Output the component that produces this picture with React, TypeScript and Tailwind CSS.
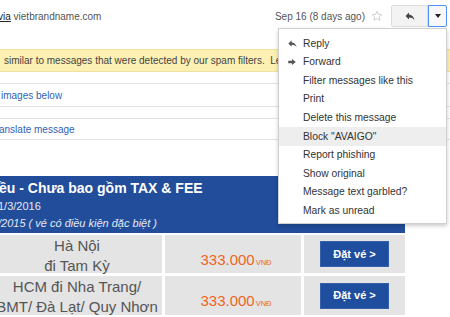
import React from 'react';

// --- Menu items (the mail "more" dropdown) ---
const menuItems = [
  { label: 'Reply', icon: 'reply' },
  { label: 'Forward', icon: 'forward' },
  { label: 'Filter messages like this' },
  { label: 'Print' },
  { label: 'Delete this message' },
  { label: 'Block "AVAIGO"', active: true },
  { label: 'Report phishing' },
  { label: 'Show original' },
  { label: 'Message text garbled?' },
  { label: 'Mark as unread' },
];

const fares = [
  { route: ['Hà Nội', 'đi Tam Kỳ'], price: '333.000' },
  { route: ['HCM đi Nha Trang/', 'BMT/ Đà Lạt/ Quy Nhơn'], price: '333.000' },
];

function ReplyIcon({ className }: { className?: string }) {
  return (
    <svg viewBox="0 0 24 24" className={className} fill="currentColor">
      <path d="M10 9V5l-7 7 7 7v-4.1c5 0 8.5 1.6 11 5.1-1-5-4-10-11-11z" />
    </svg>
  );
}

function ForwardIcon({ className }: { className?: string }) {
  return (
    <svg viewBox="0 0 24 24" className={className} fill="currentColor">
      <path d="M12 5v4H3v6h9v4l9-7z" />
    </svg>
  );
}

export default function App() {
  return (
    <div className="relative w-[450px] h-[317px] overflow-hidden bg-white font-['Liberation_Sans',Arial,sans-serif]">
      {/* Header */}
      <div className="mt-[5px] h-[22px] flex items-center justify-between pr-[3px]">
        <div className="text-[10px] text-[#555] -ml-[2px]">
          <span className="underline text-[#222]">via</span> vietbrandname.com
        </div>
        <div className="flex items-center h-full">
          <span className="text-[10px] text-[#555]">Sep 16 (8 days ago)</span>
          <svg viewBox="0 0 24 24" className="w-[12px] h-[12px] ml-[6px] text-[#c8c8c8]" fill="none" stroke="currentColor" strokeWidth="1.8">
            <path d="M12 2.5l2.9 6.2 6.6.7-5 4.5 1.4 6.6L12 17.2l-5.9 3.3 1.4-6.6-5-4.5 6.6-.7z" />
          </svg>
          <div className="ml-[8px] w-[37px] h-full flex items-center justify-center bg-[#f3f3f3] border border-[#dcdcdc] rounded-l-[2px]">
            <ReplyIcon className="w-[12px] h-[12px] text-[#444]" />
          </div>
          <div className="w-[19px] h-full flex items-center justify-center bg-[#f8f8f8] border border-[#4d90fe] rounded-r-[2px]">
            <div className="w-0 h-0 border-x-[3px] border-x-transparent border-t-[4px] border-t-[#222]" />
          </div>
        </div>
      </div>

      {/* Spam warning */}
      <div className="mt-[22px] h-[23px] flex items-center pl-[4px] bg-[#fcf0b2] border-y border-[#f1e1a0] text-[10px] text-[#444] whitespace-nowrap">
        similar to messages that were detected by our spam filters.&nbsp;&nbsp;Learn more
      </div>

      {/* Link rows */}
      <div className="mt-[11px] h-[24px] flex items-center pl-[1px] border-y border-[#e3e3e3] text-[10px] text-[#2f63b8]">
        images below
      </div>
      <div className="mt-[11px] h-[22px] flex items-center -ml-[1px] border-y border-[#e3e3e3] text-[10px] text-[#2f63b8]">
        anslate message
      </div>

      {/* Mail body: fare table */}
      <div className="mt-[36px] -ml-[8px] w-[413px]">
        <div className="h-[57px] bg-[#214d9b] text-white pl-[7px] pt-[4px]">
          <div className="text-[14px] leading-[16px] font-bold whitespace-nowrap">ều - Chưa bao gồm TAX &amp; FEE</div>
          <div className="mt-[3px] text-[11px] leading-[14px] text-[#e4eaf5] -ml-[1px]">1/3/2016</div>
          <div className="mt-[3px] text-[11px] leading-[14px] italic text-[#e4eaf5] -ml-[1px]">/2015 ( vé có điều kiện đặc biệt )</div>
        </div>
        <div className="mt-[2px] grid grid-cols-[170px_136px_101px] gap-[3px]">
          {fares.map((f, i) => (
            <React.Fragment key={i}>
              <div className={`${i === 0 ? 'h-[38px]' : 'h-[39px]'} bg-[#e4e4e4] pt-[1px] text-center text-[15px] leading-[20px] text-[#555] whitespace-nowrap`}>
                <div>{f.route[0]}</div>
                <div>{f.route[1]}</div>
              </div>
              <div className="bg-[#e4e4e4] pt-[16px] pl-[6px] flex justify-center items-baseline text-[#f0641e] leading-[18px]">
                <span className="text-[15px]">{f.price}</span>
                <span className="text-[7.5px] ml-[1px]">VNĐ</span>
              </div>
              <div className="bg-[#e4e4e4] flex items-center justify-center">
                <div className="w-[69px] h-[26px] flex items-center justify-center bg-[#1f4e9f] border border-[#3561ac] text-white text-[11px] font-bold">
                  Đặt vé &gt;
                </div>
              </div>
            </React.Fragment>
          ))}
        </div>
      </div>

      {/* Dropdown menu */}
      <div className="absolute left-[278px] top-[28px] w-[169px] bg-white border border-[#d0d0d0] shadow-[0_2px_4px_rgba(0,0,0,0.2)] pt-[5px] pb-[3px]">
        {menuItems.map((item) => (
          <div
            key={item.label}
            className={`h-[18.6px] flex items-center text-[10.3px] text-[#333] ${item.active ? 'bg-[#eeeeee]' : ''}`}
          >
            <div className="w-[24px] flex justify-center pl-[2px]">
              {item.icon === 'reply' && <ReplyIcon className="w-[11px] h-[11px] text-[#555]" />}
              {item.icon === 'forward' && <ForwardIcon className="w-[10px] h-[10px] text-[#555]" />}
            </div>
            <span className="whitespace-nowrap">{item.label}</span>
          </div>
        ))}
      </div>
    </div>
  );
}
